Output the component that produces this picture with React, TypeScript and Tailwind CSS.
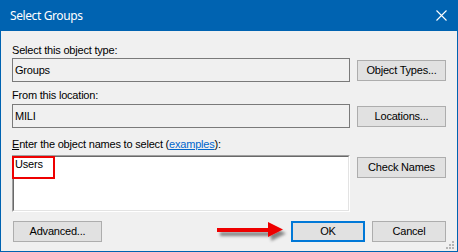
const font = { fontFamily: '"Liberation Sans", Arial, sans-serif' };

function Btn({
  label,
  className = "",
  focused = false,
}: {
  label: string;
  className?: string;
  focused?: boolean;
}) {
  return (
    <div
      className={`flex h-[21px] items-center justify-center bg-[#e1e1e1] text-[11px] leading-[13px] tracking-[-0.2px] text-black ${
        focused ? "border-2 border-[#0078d7]" : "border border-[#adadad]"
      } ${className}`}
    >
      {label}
    </div>
  );
}

function ReadBox({ value }: { value: string }) {
  return (
    <div className="flex h-[24px] w-[338px] items-center border border-[#7a7a7a] bg-[#f0f0f0] pl-[2px] text-[11px] leading-[13px] tracking-[-0.2px] text-black">
      {value}
    </div>
  );
}

function Grip() {
  const dots = [
    [451, 241],
    [448, 244],
    [451, 244],
    [445, 247],
    [448, 247],
    [451, 247],
  ];
  return (
    <svg className="absolute left-0 top-0" width={458} height={252}>
      {dots.map(([x, y]) => (
        <rect key={`${x}-${y}`} x={x} y={y} width={2} height={2} fill="#b4b4b4" />
      ))}
    </svg>
  );
}

function Arrow() {
  return (
    <svg className="absolute left-[206px] top-[214px]" width={90} height={34}>
      <defs>
        <filter id="sh" x="-20%" y="-50%" width="150%" height="220%">
          <feDropShadow dx="3" dy="4" stdDeviation="1.6" floodColor="#000" floodOpacity="0.45" />
        </filter>
      </defs>
      <g filter="url(#sh)">
        <rect x={10} y={14} width={52} height={4} fill="#ee0000" />
        <polygon points="61,8 76,15.5 61,23" fill="#ee0000" />
      </g>
    </svg>
  );
}

export default function App() {
  return (
    <div
      className="relative flex h-[252px] w-[458px] flex-col border-x border-b border-[#0063b1] bg-[#f0f0f0]"
      style={font}
    >
      <div className="flex h-[31px] shrink-0 items-center justify-between bg-[#0063b1] pl-[9px] pr-[9px]">
        <span
          className="text-[12px] tracking-[-0.4px] text-white"
          style={{ fontFamily: '"Noto Sans", "Open Sans", sans-serif' }}
        >
          Select Groups
        </span>
        <svg width={11} height={11} viewBox="0 0 11 11" className="mr-[1px]">
          <path d="M0.5 0.5 L10.5 10.5 M10.5 0.5 L0.5 10.5" stroke="#fff" strokeWidth={1.1} />
        </svg>
      </div>

      <div className="flex flex-col pl-[11px] pr-[11px] tracking-[-0.2px]">
        <div className="mt-[13px] h-[13px] text-[11px] leading-[13px] text-black">
          Select this object type:
        </div>
        <div className="mt-[1px] flex items-start gap-[7px]">
          <ReadBox value="Groups" />
          <Btn label="Object Types..." className="mt-[2px] w-[89px]" />
        </div>

        <div className="mt-[7px] h-[13px] text-[11px] leading-[13px] text-black">
          From this location:
        </div>
        <div className="mt-[2px] flex items-start gap-[7px]">
          <ReadBox value="MILI" />
          <Btn label="Locations..." className="mt-[2px] w-[89px]" />
        </div>

        <div className="mt-[10px] h-[13px] text-[11px] leading-[13px] text-black">
          <span className="underline">E</span>nter the object names to select (
          <span className="text-[#0066cc] underline">examples</span>):
        </div>
        <div className="mt-[4px] flex items-start gap-[7px]">
          <div className="relative h-[57px] w-[338px] border border-b-white border-l-[#a0a0a0] border-r-white border-t-[#a0a0a0] bg-white">
            <div className="h-full border border-b-[#e3e3e3] border-l-[#696969] border-r-[#e3e3e3] border-t-[#696969] pl-[1px] pt-[1px] text-[11px] leading-[13px] text-black">
              Users
            </div>
            <div className="absolute left-[-1px] top-0 h-[23px] w-[43px] border-2 border-[#ee0000]" />
          </div>
          <Btn label="Check Names" className="mt-[2px] w-[89px]" />
        </div>

        <div className="mt-[9px] flex items-start">
          <Btn label="Advanced..." className="ml-[1px] w-[89px]" />
          <div className="flex-1" />
          <Btn label="OK" focused className="w-[74px]" />
          <Btn label="Cancel" className="ml-[7px] w-[74px]" />
        </div>
      </div>

      <Arrow />
      <Grip />
    </div>
  );
}
